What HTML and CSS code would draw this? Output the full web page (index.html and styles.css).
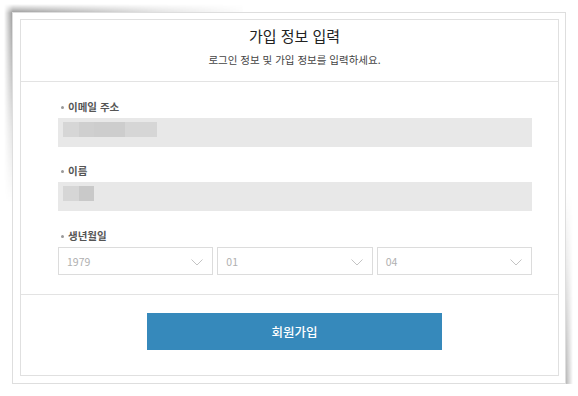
FILE: index.html
```html
<!DOCTYPE html>
<html lang="ko">
  <head>
    <meta charset="UTF-8" />
    <meta name="viewport" content="width=device-width, initial-scale=1.0" />
    <title>가입 정보 입력</title>
    <link rel="stylesheet" href="styles.css">
  </head>
  <body>
    <div class="frame">
      <div class="panel">
        <div class="header">
          <h1 class="title">가입 정보 입력</h1>
          <p class="subtitle">로그인 정보 및 가입 정보를 입력하세요.</p>
        </div>

        <div class="form">
          <div class="field">
            <label class="label">이메일 주소</label>
            <div class="input">
              <!-- blurred value -->
              <span class="blur b1"></span><span class="blur b2"></span><span class="blur b3"></span><span class="blur b3"></span><span class="blur b1"></span><span class="blur b1"></span>
            </div>
          </div>
          <div class="field">
            <label class="label">이름</label>
            <div class="input">
              <span class="blur b1"></span><span class="blur b4"></span>
            </div>
          </div>
          <div class="field">
            <label class="label">생년월일</label>
            <div class="selects">
              <div class="select">
                <span>1979</span>
                <svg width="12" height="7" viewBox="0 0 12 7"><path d="M0.5 0.5 L6 6 L11.5 0.5" fill="none" stroke="#c4c4c4" stroke-width="1"/></svg>
              </div>
              <div class="select">
                <span>01</span>
                <svg width="12" height="7" viewBox="0 0 12 7"><path d="M0.5 0.5 L6 6 L11.5 0.5" fill="none" stroke="#c4c4c4" stroke-width="1"/></svg>
              </div>
              <div class="select">
                <span>04</span>
                <svg width="12" height="7" viewBox="0 0 12 7"><path d="M0.5 0.5 L6 6 L11.5 0.5" fill="none" stroke="#c4c4c4" stroke-width="1"/></svg>
              </div>
            </div>
          </div>
        </div>

        <div class="actions">
          <button class="submit">회원가입</button>
        </div>
      </div>
    </div>
  </body>
</html>
```

FILE: styles.css
```css
html {
  background: #ffffff;
}

body {
  margin: 0;
  padding: 12px 0 0 12px;
  font-family: "Noto Sans CJK KR", "Noto Sans", sans-serif;
  color: #333;
}

.frame {
  position: relative;
  width: 554px;
  height: 372px;
  box-sizing: border-box;
  border: 1px solid #dedede;
  background: #ffffff;
  padding: 6px 0 0 7px;
}
/* page curl shadows, fading along the edge and outward */
.frame::before,
.frame::after {
  content: "";
  position: absolute;
  z-index: -1;
  -webkit-mask-composite: source-in;
  mask-composite: intersect;
}
.frame::before {
  top: -10px;
  left: -10px;
  width: 240px;
  height: 200px;
  background: radial-gradient(240px 190px at 10px 10px, rgba(0, 0, 0, 0.42), rgba(0, 0, 0, 0.12) 60%, rgba(0, 0, 0, 0) 100%);
  -webkit-mask-image: linear-gradient(to bottom, transparent 1px, #000 10px), linear-gradient(to right, transparent 1px, #000 10px);
  mask-image: linear-gradient(to bottom, transparent 1px, #000 10px), linear-gradient(to right, transparent 1px, #000 10px);
}
.frame::after {
  right: -9px;
  bottom: -9px;
  width: 260px;
  height: 200px;
  background: radial-gradient(260px 190px at calc(100% - 9px) calc(100% - 9px), rgba(0, 0, 0, 0.32), rgba(0, 0, 0, 0.1) 60%, rgba(0, 0, 0, 0) 100%);
  -webkit-mask-image: linear-gradient(to top, transparent 1px, #000 9px), linear-gradient(to left, transparent 1px, #000 9px);
  mask-image: linear-gradient(to top, transparent 1px, #000 9px), linear-gradient(to left, transparent 1px, #000 9px);
}

.panel {
  width: 539px;
  height: 357px;
  box-sizing: border-box;
  border: 1px solid #e0e0e0;
  display: flex;
  flex-direction: column;
}

.header {
  padding: 6px 0 13px 10px;
  border-bottom: 1px solid #e3e3e3;
  text-align: center;
}
.title {
  margin: 0;
  font-size: 15px;
  font-weight: 400;
  line-height: 20px;
  color: #222;
}
.subtitle {
  margin: 6px 0 0 0;
  font-size: 10.5px;
  line-height: 16px;
  color: #444;
}

.form {
  padding: 17px 26px 19px 37px;
  border-bottom: 1px solid #e3e3e3;
  display: flex;
  flex-direction: column;
  gap: 16px;
}
.label {
  display: block;
  font-size: 10.5px;
  line-height: 16px;
  font-weight: 700;
  color: #555;
  margin-bottom: 3px;
  padding-left: 3px;
}
.label::before {
  content: "";
  display: inline-block;
  width: 3px;
  height: 3px;
  border-radius: 50%;
  background: #999;
  vertical-align: middle;
  margin-right: 4px;
  margin-top: -2px;
}
.field:nth-child(3) {
  margin-top: 1px;
}

.input {
  height: 29px;
  background: #e8e8e8;
  display: flex;
  align-items: flex-start;
  padding: 4px 0 0 5px;
  box-sizing: border-box;
}
.blur {
  width: 15.6px;
  height: 15px;
}
.b1 {
  background: #d6d6d6;
}
.b2 {
  background: #cfcfcf;
}
.b3 {
  background: #cdcdcd;
}
.b4 {
  background: #c9c9c9;
}

.selects {
  display: flex;
  gap: 4px;
}
.select {
  flex: 1;
  height: 28px;
  box-sizing: border-box;
  border: 1px solid #dcdcdc;
  display: flex;
  align-items: center;
  justify-content: space-between;
  padding: 0 9px 0 8px;
  font-size: 10.5px;
  color: #b0b0b0;
}
.select svg {
  margin-top: 2px;
}

.actions {
  flex: 1;
  display: flex;
  justify-content: center;
  padding-top: 18px;
  padding-left: 10px;
}
.submit {
  width: 295px;
  height: 37px;
  border: none;
  background: #3689bb;
  color: #ffffff;
  font-family: inherit;
  font-size: 12.5px;
  font-weight: 500;
}
```
